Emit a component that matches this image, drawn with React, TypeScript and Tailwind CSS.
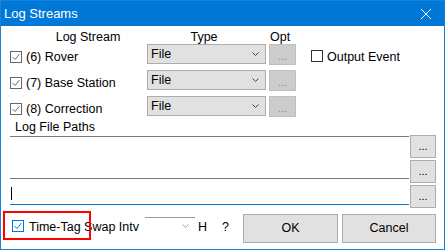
import React from "react";

function Check({ color }: { color: string }) {
  return (
    <svg width="10" height="10" viewBox="0 0 10 10" className="block">
      <path d="M1.5 5 L4 7.5 L8.5 2" fill="none" stroke={color} strokeWidth="1" />
    </svg>
  );
}

function CheckBox({ checked, border, mark, className }: { checked: boolean; border: string; mark: string; className?: string }) {
  return (
    <div
      className={`w-[12px] h-[12px] shrink-0 border bg-white flex items-center justify-center ${className ?? ""}`}
      style={{ borderColor: border }}
    >
      {checked && <Check color={mark} />}
    </div>
  );
}

function Chevron({ color }: { color: string }) {
  return (
    <svg width="7" height="4" viewBox="0 0 7 4" className="block">
      <path d="M0.5 0.5 L3.5 3.5 L6.5 0.5" fill="none" stroke={color} strokeWidth="1" />
    </svg>
  );
}

function StreamRow({ label, extra }: { label: string; extra?: React.ReactNode }) {
  return (
    <div className="flex h-[20px] items-start">
      <div className="w-[146px] flex items-start shrink-0">
        <CheckBox checked border="#666666" mark="#6e6e6e" className="ml-[9px] mt-[7px]" />
        <span className="ml-[4px] mt-[6px] leading-[14px] whitespace-nowrap">{label}</span>
      </div>
      <div className="w-[119px] h-[20px] shrink-0 bg-[#e1e1e1] border border-[#adadad] flex items-center justify-between pl-[3px] pr-[6px]">
        <span className="leading-[14px]">File</span>
        <Chevron color="#444444" />
      </div>
      <div className="ml-[3px] w-[27px] h-[21px] shrink-0 bg-[#cccccc] border border-[#bfbfbf] flex items-center justify-center text-[#8a8a8a] text-[11px] leading-[10px] pt-[2px]">
        ...
      </div>
      {extra}
    </div>
  );
}

function DotsButton({ className }: { className?: string }) {
  return (
    <div className={`w-[26px] h-[23px] bg-[#e1e1e1] border border-[#adadad] flex items-center justify-center text-[11px] leading-[10px] pb-[2px] ${className ?? ""}`}>
      ...
    </div>
  );
}

export default function App() {
  return (
    <div
      className="w-[446px] h-[251px] bg-white text-black text-[12.5px] overflow-hidden"
      style={{ fontFamily: '"Liberation Sans", Arial, sans-serif' }}
    >
      <div className="w-[445px] h-[250px] border border-[#1883d7] flex flex-col bg-white">
        {/* Title bar */}
        <div className="h-[25px] shrink-0 bg-[#0078d7] flex items-center justify-between pl-[3px] pr-[13px] text-white text-[13px]">
          <span className="leading-[16px]">Log Streams</span>
          <svg width="10" height="10" viewBox="0 0 10 10" className="block">
            <path d="M0 0 L10 10 M10 0 L0 10" stroke="#ffffff" strokeWidth="1" />
          </svg>
        </div>

        {/* Body */}
        <div className="flex flex-col pt-[4px]">
          {/* Header */}
          <div className="flex h-[14px] leading-[14px] whitespace-nowrap">
            <span className="ml-[37px] w-[100px] text-center">Log Stream</span>
            <span className="w-[132px] text-center">Type</span>
            <span className="w-[20px] text-center">Opt</span>
          </div>

          {/* Streams */}
          <div className="flex flex-col gap-[6px]">
            <StreamRow
              label="(6) Rover"
              extra={
                <div className="ml-[15px] flex items-start">
                  <CheckBox checked={false} border="#333333" mark="#333333" className="mt-[6px]" />
                  <span className="ml-[4px] mt-[6px] leading-[14px] whitespace-nowrap">Output Event</span>
                </div>
              }
            />
            <StreamRow label="(7) Base Station" />
            <StreamRow label="(8) Correction" />
          </div>

          {/* Log File Paths */}
          <div className="mt-[4px] h-[14px] leading-[14px] pl-[14px]">Log File Paths</div>

          <div className="flex h-[74px]">
            <div className="ml-[9px] w-[399px] flex flex-col">
              <div className="mt-[2px] h-px bg-[#7a7a7a]" />
              <div className="h-[41px]" />
              <div className="h-px bg-[#7a7a7a]" />
              <div className="h-[25px]">
                <div className="ml-[1px] mt-[8px] w-px h-[13px] bg-black" />
              </div>
              <div className="h-px bg-[#0078d7]" />
            </div>
            <div className="ml-[1px] flex flex-col">
              <DotsButton className="mt-[1px]" />
              <DotsButton className="mt-[2px]" />
              <DotsButton className="mt-[2px]" />
            </div>
          </div>

          {/* Bottom row */}
          <div className="relative mt-[6px] flex h-[29px] items-start">
            <CheckBox checked border="#0078d7" mark="#0078d7" className="ml-[11px] mt-[6px]" />
            <span className="ml-[5px] mt-[6px] w-[114px] leading-[14px] whitespace-nowrap">Time-Tag Swap Intv</span>
            <div className="ml-[2px] mt-[3px] w-[50px] h-[17px] border-t border-[#9a9a9a] flex items-center justify-end pr-[6px]">
              <Chevron color="#a0a0a0" />
            </div>
            <span className="ml-[3px] mt-[6px] w-[24px] leading-[14px]">H</span>
            <span className="mt-[6px] w-[21px] leading-[14px]">?</span>
            <div className="w-[95px] h-[29px] bg-[#e1e1e1] border border-[#adadad] flex items-center justify-center">
              OK
            </div>
            <div className="ml-[4px] w-[94px] h-[29px] bg-[#e1e1e1] border border-[#adadad] flex items-center justify-center">
              Cancel
            </div>
            <div className="absolute left-[2px] top-[-3px] w-[88px] h-[29px] border-2 border-[#ff0000] pointer-events-none" />
          </div>
        </div>
      </div>
    </div>
  );
}
